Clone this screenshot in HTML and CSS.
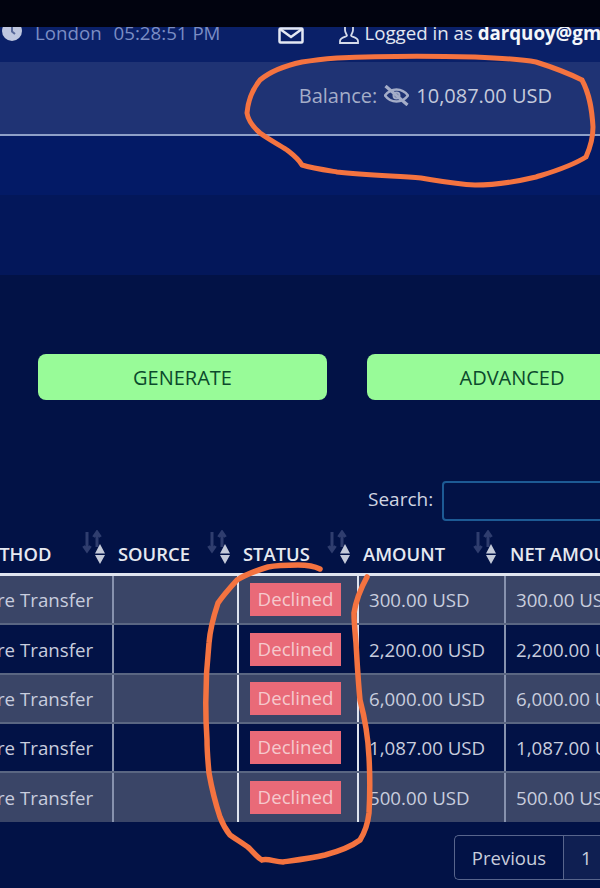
FILE: index.html
```html
<!DOCTYPE html>
<html lang="en">
<head>
    <meta charset="UTF-8">
    <meta name="viewport" content="width=device-width, initial-scale=1.0">
    <title>Transactions</title>
    <link rel="stylesheet" href="styles.css">
</head>
<body>
    <div class="black-bar"></div>

    <!-- Top bar -->
    <div class="top-bar">
        <svg class="clock" width="22" height="22" viewBox="0 0 22 22"><circle cx="11" cy="11" r="10" fill="#bfc7df"/><path d="M11 5v6.500l3 2.500" fill="none" stroke="#5a6a9a" stroke-width="2"/></svg>
        <span class="city">London</span>
        <span class="time">05:28:51 PM</span>
        <svg class="mail" width="26" height="17" viewBox="0 0 26 17"><rect x="1.500" y="1.500" width="23" height="14" rx="1" fill="none" stroke="#e4e8f3" stroke-width="2.500"/><path d="M2 2l11 8 11-8" fill="none" stroke="#e4e8f3" stroke-width="2.500"/></svg>
        <svg class="user" width="20" height="20" viewBox="0 0 20 20"><path d="M6 0h8v5c0 2.500-1.500 4-2 5.500 0 1.500 7 1.500 7 5.500v2H1v-2c0-4 7-4 7-5.500C7.500 9 6 7.500 6 5z" fill="none" stroke="#d5dbea" stroke-width="1.800"/></svg>
        <span class="login">Logged in as <b>darquoy@gmail.com</b></span>
    </div>

    <!-- Balance -->
    <div class="balance-bar">
        <span class="balance-label">Balance:</span>
        <svg class="eye" width="25" height="21" viewBox="0 0 25 21"><path d="M1 10.500c3-4 7-6 11.500-6s8.500 2 11.500 6c-3 4-7 6-11.500 6S4 14.500 1 10.500z" fill="none" stroke="#a4adc8" stroke-width="2.500"/><circle cx="12.500" cy="10.500" r="3" fill="none" stroke="#a4adc8" stroke-width="2"/><path d="M1.500 1l22 19" stroke="#a4adc8" stroke-width="3.200"/></svg>
        <span class="balance-value">10,087.00 USD</span>
    </div>
    <div class="band"></div>
    <div class="band-dark"></div>

    <!-- Buttons -->
    <div class="actions">
        <button class="green-btn first">GENERATE</button>
        <button class="green-btn second">ADVANCED</button>
    </div>

    <div class="search-row">
        <label for="search">Search:</label>
        <input type="text" id="search">
    </div>

    <!-- Table -->
    <div class="table-wrap">
        <table>
            <thead>
                <tr>
                    <th class="col-method">METHOD<svg class="sort" width="24" height="34" viewBox="0 0 24 34"><path d="M5 21V2M1.500 16l3.500 5 3.500-5M15 17V2M11.500 7L15 2l3.500 5" fill="none" stroke="#2f3d6e" stroke-width="3"/><path d="M18 14l5 9.500H13zM13 25h10l-5 9z" fill="#c4cad9"/></svg></th>
                    <th class="col-source">SOURCE<svg class="sort" width="24" height="34" viewBox="0 0 24 34"><path d="M5 21V2M1.500 16l3.500 5 3.500-5M15 17V2M11.500 7L15 2l3.500 5" fill="none" stroke="#2f3d6e" stroke-width="3"/><path d="M18 14l5 9.500H13zM13 25h10l-5 9z" fill="#c4cad9"/></svg></th>
                    <th class="col-status">STATUS<svg class="sort" width="24" height="34" viewBox="0 0 24 34"><path d="M5 21V2M1.500 16l3.500 5 3.500-5M15 17V2M11.500 7L15 2l3.500 5" fill="none" stroke="#2f3d6e" stroke-width="3"/><path d="M18 14l5 9.500H13zM13 25h10l-5 9z" fill="#c4cad9"/></svg></th>
                    <th class="col-amount">AMOUNT<svg class="sort wide" width="24" height="34" viewBox="0 0 24 34"><path d="M5 21V2M1.500 16l3.500 5 3.500-5M15 17V2M11.500 7L15 2l3.500 5" fill="none" stroke="#2f3d6e" stroke-width="3"/><path d="M18 14l5 9.500H13zM13 25h10l-5 9z" fill="#c4cad9"/></svg></th>
                    <th class="col-net">NET AMOUNT</th>
                </tr>
            </thead>
            <tbody>
                <tr class="odd"><td>Wire Transfer</td><td></td><td class="status"><span class="badge">Declined</span></td><td>300.00 USD</td><td>300.00 USD</td></tr>
                <tr><td>Wire Transfer</td><td></td><td class="status"><span class="badge">Declined</span></td><td>2,200.00 USD</td><td>2,200.00 USD</td></tr>
                <tr class="odd short"><td>Wire Transfer</td><td></td><td class="status"><span class="badge">Declined</span></td><td>6,000.00 USD</td><td>6,000.00 USD</td></tr>
                <tr class="short"><td>Wire Transfer</td><td></td><td class="status"><span class="badge">Declined</span></td><td>1,087.00 USD</td><td>1,087.00 USD</td></tr>
                <tr class="odd"><td>Wire Transfer</td><td></td><td class="status"><span class="badge">Declined</span></td><td>500.00 USD</td><td>500.00 USD</td></tr>
            </tbody>
        </table>
    </div>

    <div class="pagination">
        <span class="page prev">Previous</span>
        <span class="page current">1</span>
    </div>

    <!-- Hand drawn marks on top of the screenshot -->
    <svg class="marks" width="600" height="888" viewBox="0 0 600 888">
        <path d="M337 58C380 56 430 56 475 57C500 58 520 59 536 62C555 68 570 74 582 80C590 95 592 110 593 127C593 138 590 148 586 157C570 167 552 172 536 177C515 182 495 185 475 185C455 184 440 181 421 178C395 176 365 175 337 172C325 170 312 168 302 165C298 158 292 154 287 150C278 144 268 139 260 133C252 126 248 120 247 113C248 100 252 90 260 80C272 70 288 65 302 62C315 60 325 59 337 58" fill="none" stroke="#f47340" stroke-width="5" stroke-linecap="round"/>
        <path d="M320 569C312 565 305 565 298 565C288 565 278 565 268 567C255 571 245 575 237 580C228 590 222 597 218 603C213 618 210 630 209 643C205 680 205 710 207 740C207 752 208 762 209 773C212 790 216 805 220 817C223 825 226 830 230 835C237 840 244 844 249 848C254 853 258 858 262 860C268 858 275 862 283 862C297 860 312 858 325 855C340 851 352 846 360 840C365 832 368 822 369 813C370 795 370 775 369 757C368 735 364 715 360 700C358 680 357 660 356 643C355 632 354 622 354 613C356 600 361 588 367 577" fill="none" stroke="#f47340" stroke-width="5.500" stroke-linecap="round"/>
    </svg>
</body>
</html>
```

FILE: styles.css
```css
html, body {
    margin: 0;
    padding: 0;
}
body {
    position: relative;
    width: 600px;
    height: 888px;
    overflow: hidden;
    background-color: #021246;
    font-family: 'Open Sans', 'Noto Sans', sans-serif;
    color: #d8dce8;
}
.black-bar {
    height: 27px;
    background-color: #01030f;
}
.top-bar {
    height: 35px;
    background-color: #0a2068;
    display: flex;
    align-items: flex-start;
    overflow: hidden;
    font-size: 18.7px;
    line-height: 12px;
    white-space: nowrap;
}
.clock {
    margin: -7px 0 0 1px;
    flex: none;
}
.city {
    margin-left: 12px;
    color: #7b8dc4;
}
.time {
    margin-left: 12px;
    color: #7b8dc4;
}
.mail {
    margin-left: 58px;
    flex: none;
}
.user {
    margin-left: 35px;
    margin-top: -2px;
    flex: none;
}
.login {
    margin-left: 5px;
    color: #e3e7f1;
}
.login b {
    color: #f4f6fa;
}
.balance-bar {
    height: 74px;
    box-sizing: border-box;
    padding: 0 48px 6px 0;
    background-color: #1f3374;
    display: flex;
    justify-content: flex-end;
    align-items: center;
    font-size: 20px;
    border-bottom: 2px solid #8ea0c8;
}
.balance-label {
    color: #a4adc8;
}
.eye {
    margin: 0 7px;
}
.balance-value {
    color: #c4cadc;
}
.band {
    height: 59px;
    background-color: #031a66;
}
.band-dark {
    height: 80px;
    background-color: #03175a;
}
.actions {
    display: flex;
    gap: 40px;
    padding: 79px 0 0 38px;
    overflow: hidden;
}
.green-btn {
    flex: none;
    height: 46px;
    border: none;
    border-radius: 8px;
    background-color: #98fb98;
    color: #0b4a2c;
    font-family: inherit;
    font-size: 20px;
    padding: 0;
}
.first {
    width: 289px;
}
.second {
    width: 290px;
}
.search-row {
    display: flex;
    align-items: center;
    gap: 9px;
    margin-top: 81px;
    padding-left: 368px;
    height: 40px;
    font-size: 19px;
    color: #d0d5e2;
    overflow: hidden;
}
.search-row label {
    margin-bottom: 5px;
}
.search-row input {
    flex: none;
    width: 200px;
    height: 40px;
    box-sizing: border-box;
    border: 2px solid #1d5a94;
    border-radius: 4px;
    background-color: #021246;
}
.table-wrap {
    margin-top: 9px;
    overflow: hidden;
}
table {
    margin-left: -28px;
    width: 700px;
    table-layout: fixed;
    border-collapse: collapse;
    font-size: 18.7px;
}
th {
    position: relative;
    height: 44px;
    box-sizing: border-box;
    padding: 4px 0 0 5px;
    text-align: left;
    font-size: 18.4px;
    font-weight: 600;
    color: #e6e9f1;
    white-space: nowrap;
    border-bottom: 3px solid #dfe4ef;
}
th.col-method {
    width: 141px;
    padding-left: 0;
}
.col-source {
    width: 125px;
}
.col-status {
    width: 120px;
}
.col-amount {
    width: 147px;
}
.col-net {
    width: 167px;
}
.sort {
    position: absolute;
    right: 7px;
    top: 0;
}
.sort.wide {
    right: 8px;
}
td {
    height: 50px;
    box-sizing: border-box;
    padding: 0 0 0 10px;
    color: #c8cdde;
    white-space: nowrap;
    border-right: 2px solid #8792ae;
    border-bottom: 2px solid #5a6682;
}
tr.short td {
    height: 49px;
}
tbody tr:last-child td {
    border-bottom: none;
}
td:first-child {
    padding-left: 3px;
}
tr.odd td {
    background-color: #3a4567;
}
td:nth-child(2),
td.status {
    border-right: 2px solid #dfe4ef;
}
td.status {
    padding-left: 11px;
}
.badge {
    display: block;
    width: 91px;
    height: 33px;
    line-height: 32px;
    text-align: center;
    background-color: #e96a78;
    color: #f5c9cd;
}
.pagination {
    display: flex;
    width: 160px;
    height: 45px;
    margin: 13px 0 0 454px;
    box-sizing: border-box;
    border: 1px solid #58658c;
    border-right: none;
    border-radius: 5px 0 0 5px;
    font-size: 18.5px;
    color: #c8cddc;
}
.page {
    display: flex;
    align-items: center;
}
.prev {
    width: 108px;
    justify-content: center;
    border-right: 1px solid #58658c;
}
.current {
    padding-left: 17px;
    flex: 1;
    background-color: #0f1f52;
}
.marks {
    position: absolute;
    left: 0;
    top: 0;
    pointer-events: none;
}
```
